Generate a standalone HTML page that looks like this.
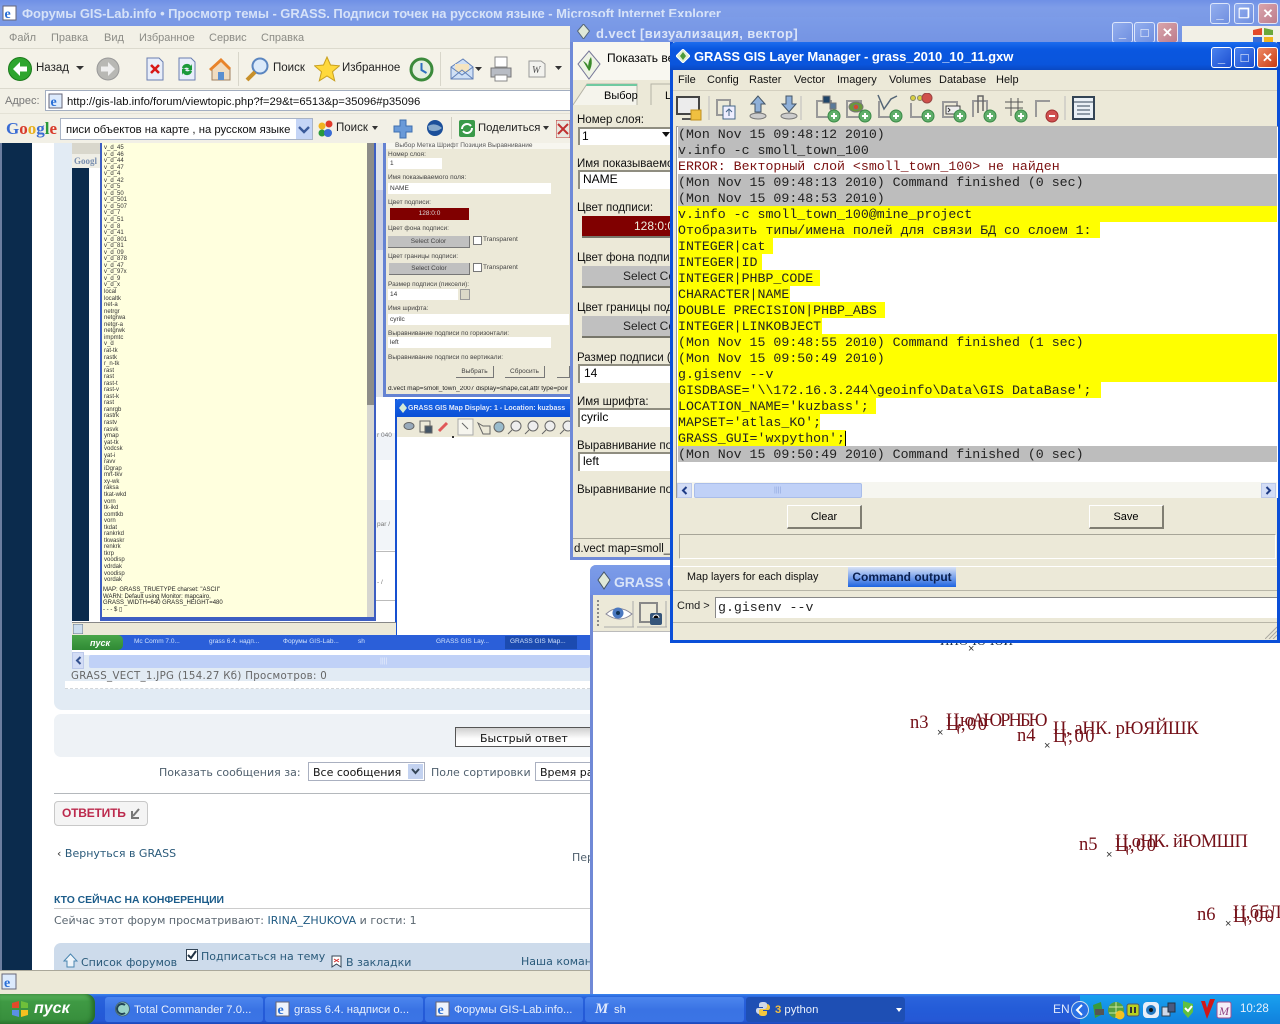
<!DOCTYPE html>
<html lang="ru"><head><meta charset="utf-8"><title>GRASS</title>
<style>
html,body{margin:0;padding:0;width:1280px;height:1024px;overflow:hidden;background:#fff}
body{position:relative;font-family:"Liberation Sans",sans-serif;font-size:12px;color:#000}
div,span,svg,pre{position:absolute}
.t{white-space:nowrap;line-height:1}
.d{font-family:"DejaVu Sans",sans-serif;font-size:11px;color:#50606e}
.m{left:678px;font-family:"Liberation Mono",monospace;font-size:13.25px;line-height:18px;height:16px;white-space:pre;color:#222}
.g{background:#bdbdbd}.y{background:#ff0}
.b{width:19px;height:19px;border:1px solid #fff;border-radius:3px;color:#fff;font:bold 13px/19px "Liberation Sans",sans-serif;text-align:center;background:linear-gradient(135deg,#4a82ef,#1c4fd0)}
.x{background:linear-gradient(135deg,#ee8a66,#c93c14)}
.bi{background:linear-gradient(135deg,#93aeee,#6f8fe0);border-color:#dce6fb}
.xi{background:linear-gradient(135deg,#d9a4ab,#bd7d8c);border-color:#e4e4f4}
.lab{left:577px;font-size:11.5px;white-space:nowrap;line-height:1;color:#111;margin-top:2px}
.inp{left:578px;width:94px;background:#fff;border-top:2px solid #8f8d80;border-left:2px solid #8f8d80;font-size:12px;line-height:14px;padding-left:2px;box-sizing:border-box}
.bt{left:582px;width:90px;height:20px;border-right:2px solid #77766a;border-bottom:2px solid #77766a;background:#c0c0c0;font-size:12px;line-height:21px;white-space:nowrap;overflow:hidden;color:#222}
.nl{font-size:6.5px;color:#444;line-height:1;white-space:nowrap;font-family:"Liberation Sans",sans-serif}
.nf{left:388px;background:#fff;height:11px;font-size:6.5px;line-height:11px;color:#333;padding-left:2px;box-sizing:border-box}
.nb{background:#c0c0c0;border-right:1px solid #777;border-bottom:1px solid #777;font-size:6.5px;line-height:12px;color:#444;text-align:center;box-sizing:border-box}
.mi{top:73px;font-size:11px;line-height:14px;white-space:nowrap;color:#111}
.ti{top:27px;height:22px;font-size:11px;line-height:22px;color:#8b8b85}
.tb{top:997px;height:25px;border-radius:3px;background:linear-gradient(#4c86ee,#3a73e4 50%,#3b74e5);color:#e9f0fd;font-size:11.3px;line-height:27px;white-space:nowrap}
.rd{font-family:"Liberation Serif",serif;font-size:18.5px;color:#741018;white-space:nowrap;line-height:1}
.cr{font:11px/1 "Liberation Sans",sans-serif;color:#333}
.sa{background:#d3ddf6;border:1px solid #bcc9ea;box-sizing:border-box}
</style></head><body>

<!-- IE window chrome -->
<div style="left:0;top:0;width:1280px;height:26px;background:linear-gradient(#6f90e6,#7e9de8 30%,#7998e5)"></div>
<svg style="left:2px;top:5px" width="15" height="16" viewBox="0 0 15 16"><rect x="1" y="1" width="13" height="14" fill="#fff" stroke="#667"/><text x="2.5" y="13" font-family="Liberation Serif" font-size="14" font-weight="bold" fill="#2a6fd6">e</text></svg>
<div class="t" style="left:22px;top:7px;font-size:13px;font-weight:bold;color:#d6e2f8;letter-spacing:-.05px">Форумы GIS-Lab.info • Просмотр темы - GRASS. Подписи точек на русском языке - Microsoft Internet Explorer</div>
<div class="b bi" style="left:1210px;top:3px;width:18px">_</div>
<div class="b bi" style="left:1234px;top:3px;width:18px">❐</div>
<div class="b xi" style="left:1258px;top:3px;width:18px">✕</div>
<div style="left:0;top:26px;width:1280px;height:22px;background:#f2f0e6"></div>
<div class="ti" style="left:9px">Файл</div><div class="ti" style="left:51px">Правка</div><div class="ti" style="left:104px">Вид</div><div class="ti" style="left:139px">Избранное</div><div class="ti" style="left:209px">Сервис</div><div class="ti" style="left:261px">Справка</div>
<div style="left:0;top:48px;width:1280px;height:41px;background:#f4f2e8;border-top:1px solid #dcdace"></div>
<svg style="left:8px;top:55px" width="24" height="28" viewBox="0 0 24 28"><circle cx="12" cy="14" r="11.5" fill="#2ea52e" stroke="#1c7a1c"/><path d="M5 14l7-7v4.500h7v5h-7V21z" fill="#fff"/></svg>
<div class="t" style="left:36px;top:63px;font-size:11.5px;color:#222">Назад</div>
<svg style="left:76px;top:66px" width="8" height="5"><path d="M0 0h8L4 4z" fill="#333"/></svg>
<svg style="left:96px;top:56px" width="24" height="26" viewBox="0 0 24 26"><circle cx="12" cy="13" r="11" fill="#b8b8b4" stroke="#999"/><path d="M19 13l-7-7v4.500H5v5h7V20z" fill="#eee"/></svg>
<svg style="left:146px;top:57px" width="18" height="24" viewBox="0 0 18 24"><path d="M1 1h12l4 4v18H1z" fill="#e8eefa" stroke="#6a7fb0"/><path d="M5 8l8 8M13 8l-8 8" stroke="#d81818" stroke-width="2.600"/></svg>
<svg style="left:178px;top:57px" width="18" height="24" viewBox="0 0 18 24"><path d="M1 1h12l4 4v18H1z" fill="#e8eefa" stroke="#6a7fb0"/><path d="M4 11a5 5 0 0 1 9-2l1-2v6H9l2-1a3 3 0 0 0-5 0zM14 14a5 5 0 0 1-9 2l-1 2v-6h5l-2 1a3 3 0 0 0 5 0z" fill="#1a9a3a"/></svg>
<svg style="left:208px;top:57px" width="24" height="24" viewBox="0 0 24 24"><path d="M4 11L13 2l9 9v12H4z" fill="#f0dcc0" stroke="#a08060"/><path d="M1 12L13 1l10 10-2 2-8-8-10 9z" fill="#e8832a"/><rect x="10" y="15" width="6" height="8" fill="#5b8fd0"/></svg>
<div style="left:238px;top:52px;width:1px;height:34px;background:#d8d6ca"></div>
<svg style="left:245px;top:56px" width="26" height="26" viewBox="0 0 26 26"><circle cx="15" cy="10" r="7.500" fill="#dbeafa" stroke="#5b86c0" stroke-width="2"/><path d="M10 16L2 24" stroke="#c8902a" stroke-width="4"/></svg>
<div class="t" style="left:273px;top:63px;font-size:11.5px;color:#222">Поиск</div>
<svg style="left:314px;top:56px" width="26" height="26" viewBox="0 0 26 26"><path d="M13 1l3.500 8 9 .8-7 6 2.200 9L13 20l-7.700 4.800 2.200-9-7-6 9-.8z" fill="#ffd93c" stroke="#c8a020"/></svg>
<div class="t" style="left:342px;top:63px;font-size:11.5px;color:#222">Избранное</div>
<svg style="left:409px;top:57px" width="25" height="25" viewBox="0 0 25 25"><circle cx="12.500" cy="12.500" r="10.500" fill="#e5efe0" stroke="#3b8a3b" stroke-width="3"/><path d="M12.500 6v7l5 3" stroke="#2f6fbf" stroke-width="2" fill="none"/></svg>
<div style="left:440px;top:52px;width:1px;height:34px;background:#d8d6ca"></div>
<svg style="left:450px;top:57px" width="26" height="24" viewBox="0 0 26 24"><path d="M1 10l12-8 10 8v12H1z" fill="#cfe0f6" stroke="#6080b8"/><path d="M5 7h14v8H5z" fill="#f4e4c0"/><path d="M1 22l11-9 11 9M1 10l11 8 11-8" fill="none" stroke="#6080b8"/></svg>
<svg style="left:475px;top:67px" width="7" height="4"><path d="M0 0h7L3.500 4z" fill="#333"/></svg>
<svg style="left:489px;top:56px" width="24" height="26" viewBox="0 0 24 26"><rect x="6" y="1" width="12" height="10" fill="#fff" stroke="#888"/><path d="M2 12h20v9H2z" fill="#b8bcc4" stroke="#777"/><rect x="6" y="19" width="12" height="6" fill="#fff" stroke="#888"/></svg>
<svg style="left:528px;top:59px" width="18" height="20" viewBox="0 0 18 20"><path d="M1 2h12l4 3v13H1z" fill="#f2f2ee" stroke="#999"/><text x="4" y="14" font-family="Liberation Serif" font-size="10" font-style="italic" fill="#555">W</text></svg>
<svg style="left:555px;top:66px" width="7" height="4"><path d="M0 0h7L3.500 4z" fill="#333"/></svg>

<div style="left:0;top:88px;width:1280px;height:25px;background:#f2f0e6;border-top:1px solid #dcdace"></div>
<div class="t" style="left:5px;top:96px;font-size:11px;color:#777">Адрес:</div>
<div style="left:45px;top:90px;width:530px;height:21px;background:#fff;border:1px solid #a3aec0;box-sizing:border-box"></div>
<svg style="left:48px;top:93px" width="15" height="16" viewBox="0 0 15 16"><rect x="1" y="1" width="13" height="14" fill="#dceafc" stroke="#667"/><text x="2.500" y="13" font-family="Liberation Serif" font-size="14" font-weight="bold" fill="#2a6fd6">e</text></svg>
<div class="t" style="left:67px;top:97px;font-size:11.3px;color:#111">http://gis-lab.info/forum/viewtopic.php?f=29&amp;t=6513&amp;p=35096#p35096</div>

<div style="left:0;top:113px;width:1280px;height:30px;background:#f2f0e6;border-top:1px solid #e4e2d6;box-sizing:border-box"></div>
<div class="t" style="left:6px;top:120px;font-family:'Liberation Serif',serif;font-size:17px;font-weight:bold"><span style="position:static;color:#3a6cd4">G</span><span style="position:static;color:#d83a2a">o</span><span style="position:static;color:#e8b020">o</span><span style="position:static;color:#3a6cd4">g</span><span style="position:static;color:#2a9a3a">l</span><span style="position:static;color:#d83a2a">e</span></div>
<div style="left:60px;top:118px;width:253px;height:22px;background:#fff;border:1px solid #a9b4c6;box-sizing:border-box"></div>
<div class="t" style="left:66px;top:125px;font-size:11.3px;color:#111">писи объектов на карте , на русском языке</div>
<svg style="left:296px;top:119px" width="16" height="20" viewBox="0 0 16 20"><rect width="16" height="20" fill="#c5d5f6"/><path d="M3 8l5 5 5-5" stroke="#3a5a9a" stroke-width="2.400" fill="none"/></svg>
<svg style="left:317px;top:119px" width="16" height="20" viewBox="0 0 16 20"><circle cx="12" cy="5" r="3.500" fill="#e23a2a"/><circle cx="5" cy="7" r="3.500" fill="#f0b420"/><circle cx="5" cy="14" r="3.500" fill="#2a9a3a"/><circle cx="11" cy="14" r="4" fill="#3a6cd4"/></svg>
<div class="t" style="left:336px;top:123px;font-size:11.5px;color:#222">Поиск</div>
<svg style="left:372px;top:126px" width="6" height="4"><path d="M0 0h6L3 4z" fill="#333"/></svg>
<svg style="left:393px;top:119px" width="20" height="20" viewBox="0 0 20 20"><path d="M7 1h6v6h6v6h-6v6H7v-6H1V7h6z" fill="#6a9ad8" stroke="#3f6fb0"/></svg>
<svg style="left:426px;top:119px" width="18" height="18" viewBox="0 0 18 18"><circle cx="9" cy="9" r="8" fill="#1b4f9a"/><path d="M2 7q7-4 14 2-6 5-13 2z" fill="#8ac"/></svg>
<div style="left:451px;top:117px;width:1px;height:22px;background:#d0cec2"></div>
<svg style="left:459px;top:120px" width="16" height="17" viewBox="0 0 16 17"><rect width="16" height="17" rx="2" fill="#3a9a4a"/><path d="M3 9a5 5 0 0 1 9-3M13 8a5 5 0 0 1-9 3" stroke="#fff" stroke-width="2" fill="none"/></svg>
<div class="t" style="left:478px;top:123px;font-size:11.3px;color:#222">Поделиться</div>
<svg style="left:543px;top:126px" width="6" height="4"><path d="M0 0h6L3 4z" fill="#333"/></svg>
<svg style="left:556px;top:120px" width="14" height="18" viewBox="0 0 14 18"><rect width="14" height="18" fill="#e8e8e0" stroke="#c03030"/><path d="M2 4l10 10M12 4L2 14" stroke="#c03030" stroke-width="2"/></svg>

<!-- Page -->
<div style="left:0;top:143px;width:2px;height:827px;background:#6c7ea0"></div>
<div style="left:2px;top:143px;width:30px;height:827px;background:#0b2b4d"></div>
<div style="left:54px;top:143px;width:537px;height:567px;background:#e2ebf4;border-radius:0 0 0 8px"></div>

<!-- nested screenshot -->
<div style="left:72px;top:143px;width:519px;height:512px;background:#fff"></div>
<div style="left:72px;top:143px;width:28px;height:11px;background:#d9d7cc"></div>
<div style="left:72px;top:154px;width:28px;height:14px;background:#efeee6"></div>
<div class="t" style="left:74px;top:156px;font:bold 9px 'Liberation Serif',serif;color:#7a8fb0">Googl</div>
<div style="left:72px;top:168px;width:17px;height:453px;background:#0b2b4d"></div>
<div style="left:100px;top:143px;width:276px;height:478px;background:#3d5ec2"></div>
<div style="left:102px;top:143px;width:265px;height:474px;background:#ffffde"></div>
<div style="left:367px;top:143px;width:7px;height:262px;background:#8d8d88"></div>
<div style="left:367px;top:405px;width:7px;height:212px;background:#d6d6d0"></div>
<pre class="nl" style="left:104px;top:145px;margin:0;line-height:6.55px;font-size:6px;color:#333;white-space:pre">v_d_45
v_d_46
v_d_44
v_d_47
v_d_4
v_d_42
v_d_5
v_d_50
v_d_501
v_d_507
v_d_7
v_d_51
v_d_8
v_d_41
v_d_801
v_d_81
v_d_09
v_d_878
v_d_47
v_d_97x
v_d_9
v_d_x
local
localtk
net-a
netrgr
netgrwa
netgr-a
netgrwk
impmtc
v_d
rat-tk
rastk
r_n-tk
rast
rast
rast-t
rast-v
rast-k
rast
ranrgb
rastrk
rastv
rasvk
ymap
yat-tk
vodcsk
yat-i
ravv
iDgrap
mrt-tkv
xy-wk
raksa
tkat-wkd
vorn
tk-ikd
comtkb
vorn
tkdat
rankrkd
tkwaskr
renkrk
tkrp
voodisp
vdrdak
voodisp
vordak</pre>
<div class="t" style="left:103px;top:587px;font-size:6px;color:#222">MAP: GRASS_TRUETYPE  charset: "ASCII"</div>
<div class="t" style="left:103px;top:594px;font-size:6px;color:#222">WARN: Default using  Monitor: mapcairo,</div>
<div class="t" style="left:103px;top:600px;font-size:6px;color:#222">GRASS_WIDTH=640  GRASS_HEIGHT=480</div>
<div class="t" style="left:103px;top:607px;font-size:6px;color:#222">- - - $  ▯</div>

<div style="left:376px;top:143px;width:8px;height:254px;background:#dfe3ea"></div>
<div style="left:376px;top:190px;width:8px;height:60px;background:#c5cbe2"></div>
<div style="left:376px;top:397px;width:19px;height:238px;background:#fff"></div>
<div style="left:376px;top:433px;width:19px;height:27px;background:#f0f3f8"></div>
<div style="left:376px;top:500px;width:19px;height:50px;background:#f2f5f9"></div>
<div style="left:376px;top:551px;width:19px;height:1px;background:#bbb"></div>
<div style="left:376px;top:600px;width:19px;height:1px;background:#bbb"></div>
<div class="nl" style="left:377px;top:433px;color:#777">r 040</div>
<div class="nl" style="left:377px;top:522px;color:#777">par /</div>
<div class="nl" style="left:377px;top:580px;color:#777">- /</div>

<!-- nested form -->
<div style="left:383px;top:143px;width:187px;height:254px;background:#ece9d8;border-left:3px solid #6482d2;border-bottom:3px solid #6482d2;box-sizing:border-box"></div>
<div style="left:386px;top:143px;width:184px;height:6px;background:#f7f6ef"></div>
<div class="nl" style="left:395px;top:143px;color:#555">Выбор   Метка   Шрифт   Позиция   Выравнивание</div>
<div class="nl" style="left:388px;top:152px">Номер слоя:</div>
<div class="nf" style="top:158px;width:54px">1</div>
<div class="nl" style="left:388px;top:175px">Имя показываемого поля:</div>
<div class="nf" style="top:183px;width:163px">NAME</div>
<div class="nl" style="left:388px;top:200px">Цвет подписи:</div>
<div style="left:390px;top:208px;width:79px;height:12px;background:#800000;font-size:6.5px;line-height:12px;color:#ddd;text-align:center">128:0:0</div>
<div class="nl" style="left:388px;top:226px">Цвет фона подписи:</div>
<div class="nb" style="left:388px;top:236px;width:82px;height:12px">Select Color</div>
<div style="left:473px;top:236px;width:7px;height:7px;background:#fff;border:1px solid #777"></div>
<div class="nl" style="left:483px;top:237px">Transparent</div>
<div class="nl" style="left:388px;top:254px">Цвет границы подписи:</div>
<div class="nb" style="left:389px;top:263px;width:81px;height:12px">Select Color</div>
<div style="left:473px;top:263px;width:7px;height:7px;background:#fff;border:1px solid #777"></div>
<div class="nl" style="left:483px;top:265px">Transparent</div>
<div class="nl" style="left:388px;top:282px">Размер подписи (пиксели):</div>
<div class="nf" style="top:289px;width:70px">14</div>
<div style="left:460px;top:289px;width:10px;height:11px;background:#dcd9c8;border:1px solid #999;box-sizing:border-box"></div>
<div class="nl" style="left:388px;top:306px">Имя шрифта:</div>
<div class="nf" style="top:314px;width:181px">cyrilc</div>
<div class="nl" style="left:388px;top:331px">Выравнивание подписи по горизонтали:</div>
<div class="nf" style="top:337px;width:163px">left</div>
<div class="nl" style="left:388px;top:355px">Выравнивание подписи по вертикали:</div>
<div class="nb" style="left:456px;top:366px;width:38px;height:12px;background:#ece9d8">Выбрать</div>
<div class="nb" style="left:505px;top:366px;width:40px;height:12px;background:#ece9d8">Сбросить</div>
<div class="nb" style="left:557px;top:366px;width:13px;height:12px;background:#ece9d8"></div>
<div class="nl" style="left:388px;top:386px;color:#222;width:180px;overflow:hidden">d.vect map=smoll_town_2007 display=shape,cat,attr type=point,line</div>

<!-- nested map display -->
<div style="left:395px;top:399px;width:195px;height:236px;background:#fff;border-left:2px solid #1650d0;box-sizing:border-box"></div>
<div style="left:395px;top:399px;width:195px;height:18px;background:linear-gradient(#1a66e8,#0a4fd6);border-radius:4px 0 0 0"></div>
<div class="t" style="left:408px;top:405px;font-size:7px;font-weight:bold;color:#dfe8fb">GRASS GIS Map Display: 1 - Location: kuzbass</div>
<svg style="left:399px;top:403px" width="8" height="10"><path d="M4 0l4 5-4 5-4-5z" fill="#d5ead5"/></svg>
<div style="left:397px;top:417px;width:193px;height:20px;background:#ece9d8"></div>
<svg style="left:400px;top:418px" width="170" height="18" viewBox="0 0 170 18" fill="none" stroke="#666">
<ellipse cx="9" cy="8" rx="5" ry="3.500" fill="#9ab"/><rect x="20" y="3" width="10" height="11"/><rect x="25" y="8" width="7" height="7" fill="#456"/>
<path d="M39 13l8-8" stroke="#e05858" stroke-width="3"/><rect x="58" y="1" width="15" height="16" fill="#f6f5ee" stroke="#aaa"/><path d="M62 5l6 6"/>
<path d="M78 5l5 3h7v8h-7z"/><circle cx="99" cy="9" r="5" fill="#9bc"/><circle cx="116" cy="8" r="5" fill="#eee"/><path d="M112 12l-4 4"/><circle cx="133" cy="8" r="5" fill="#eee"/><path d="M129 12l-4 4"/><circle cx="150" cy="8" r="5" fill="#eee"/><path d="M146 12l-4 4"/><circle cx="168" cy="8" r="5" fill="#eee"/><path d="M164 12l-4 4"/>
</svg>
<div style="left:452px;top:436px;width:2px;height:2px;background:#333"></div>

<!-- nested status/taskbar -->
<div style="left:72px;top:622px;width:324px;height:13px;background:#ece9d8;border-top:1px solid #888;box-sizing:border-box"></div>
<svg style="left:73px;top:624px" width="10" height="10"><rect width="10" height="10" fill="#cde" stroke="#678"/></svg>
<div style="left:72px;top:635px;width:519px;height:15px;background:#2b5fd9"></div>
<div style="left:72px;top:635px;width:51px;height:15px;background:linear-gradient(#49a64a,#2f8a34);border-radius:0 5px 5px 0"></div>
<div class="t" style="left:90px;top:638px;font:italic bold 9px 'Liberation Sans',sans-serif;color:#fff">пуск</div>
<div class="t" style="left:134px;top:639px;font-size:6.5px;color:#cfe0fb">Mc Comm 7.0...</div>
<div class="t" style="left:209px;top:639px;font-size:6.5px;color:#cfe0fb">grass 6.4. надп...</div>
<div class="t" style="left:283px;top:639px;font-size:6.5px;color:#cfe0fb">Форумы GIS-Lab...</div>
<div class="t" style="left:358px;top:639px;font-size:6.5px;color:#cfe0fb">sh</div>
<div class="t" style="left:436px;top:639px;font-size:6.5px;color:#cfe0fb">GRASS GIS Lay...</div>
<div style="left:505px;top:636px;width:72px;height:13px;background:#1c4bb0"></div>
<div class="t" style="left:510px;top:639px;font-size:6.500px;color:#cfe0fb">GRASS GIS Map...</div>
<div style="left:72px;top:650px;width:519px;height:2px;background:#fff"></div>
<div class="sa" style="left:72px;top:652px;width:12px;height:17px"></div>
<svg style="left:75px;top:656px" width="7" height="9" viewBox="0 0 7 9"><path d="M5.500 1L2 4.500 5.500 8" stroke="#33518f" stroke-width="2" fill="none"/></svg>
<div style="left:89px;top:655px;width:501px;height:13px;background:#c0d1f7;border-radius:2px"></div>
<div class="t" style="left:380px;top:658px;font-size:7px;color:#e8eefb">||||</div>
<div style="left:65px;top:681px;width:525px;height:8px;background:#fff"></div>
<div style="left:65px;top:688px;width:525px;height:0;border-top:1px dashed #d2d6da"></div>
<div class="t d" style="left:71px;top:672px;font-size:10.2px;letter-spacing:.32px;color:#666">GRASS_VECT_1.JPG (154.27 Кб) Просмотров: 0</div>

<!-- forum footer -->
<div style="left:54px;top:714px;width:537px;height:43px;background:#eef2f6;border-radius:7px 0 0 7px"></div>
<div style="left:455px;top:727px;width:136px;height:20px;background:linear-gradient(#d0d0d0,#fdfdfd 60%);border:1px solid #555;box-sizing:border-box"></div>
<div class="t d" style="left:480px;top:733px;color:#111">Быстрый ответ</div>
<div class="t d" style="left:159px;top:767px">Показать сообщения за:</div>
<div style="left:308px;top:762px;width:117px;height:19px;background:#fff;border:1px solid #aab0c0;box-sizing:border-box"></div>
<div class="t d" style="left:313px;top:767px;color:#111">Все сообщения</div>
<div style="left:408px;top:764px;width:15px;height:15px;background:#c3d2f0"></div>
<svg style="left:411px;top:768px" width="9" height="7" viewBox="0 0 9 7"><path d="M1 1l3.500 4L8 1" stroke="#345" stroke-width="2" fill="none"/></svg>
<div class="t d" style="left:431px;top:767px">Поле сортировки</div>
<div style="left:535px;top:762px;width:56px;height:19px;background:#fff;border:1px solid #aab0c0;box-sizing:border-box"></div>
<div class="t d" style="left:540px;top:767px;color:#111">Время размещения</div>
<div style="left:54px;top:793px;width:537px;height:1px;background:#b4b8bc"></div>
<div style="left:54px;top:801px;width:94px;height:25px;background:#f4f4f4;border:1px solid #c8c8c8;border-radius:4px;box-sizing:border-box"></div>
<div class="t" style="left:62px;top:807px;font-size:12px;font-weight:bold;color:#bc2a4d;letter-spacing:-.2px">ОТВЕТИТЬ</div>
<svg style="left:130px;top:808px" width="10" height="11" viewBox="0 0 10 11"><path d="M9 1L3 8M2 3v7h7" stroke="#777" stroke-width="2" fill="none"/></svg>
<div class="t d" style="left:57px;top:848px;color:#2a5a7a"><span style="position:static;color:#333">‹</span> Вернуться в GRASS</div>
<div class="t d" style="left:572px;top:852px">Перейти</div>
<div class="t" style="left:54px;top:895px;font-size:10.4px;font-weight:bold;color:#1c5c8a;margin-top:1px">КТО СЕЙЧАС НА КОНФЕРЕНЦИИ</div>
<div style="left:54px;top:908px;width:537px;height:1px;background:#ccc"></div>
<div class="t d" style="left:54px;top:915px;color:#5a6670">Сейчас этот форум просматривают: <span style="position:static;color:#1f5a82">IRINA_ZHUKOVA</span> и гости: 1</div>
<div style="left:54px;top:943px;width:537px;height:27px;background:#cddbeb;border-radius:7px 0 0 0"></div>
<svg style="left:63px;top:953px" width="15" height="15" viewBox="0 0 15 15"><path d="M1 8l6.500-7L14 8h-3v6H4V8z" fill="#eef4fa" stroke="#4a86b0"/></svg>
<div class="t d" style="left:81px;top:957px;color:#2a5a7a">Список форумов</div>
<svg style="left:186px;top:949px" width="12" height="12" viewBox="0 0 12 12"><rect x=".5" y=".5" width="11" height="11" fill="#fff" stroke="#345"/><path d="M2 6l3 3 5-7" stroke="#234" stroke-width="2" fill="none"/></svg>
<div class="t d" style="left:201px;top:951px;color:#2a5a7a">Подписаться на тему</div>
<svg style="left:331px;top:955px" width="11" height="13" viewBox="0 0 11 13"><path d="M1 1h9v11l-4.500-3L1 12z" fill="#fff" stroke="#345"/><path d="M3 4l5 3M8 4L3 7" stroke="#d02a2a"/></svg>
<div class="t d" style="left:346px;top:957px;color:#2a5a7a">В закладки</div>
<div class="t d" style="left:521px;top:956px;color:#2a5a7a">Наша команда</div>
<div style="left:0;top:970px;width:592px;height:24px;background:#ece9d8;border-top:1px solid #aaa89a;box-sizing:border-box"></div>
<svg style="left:1px;top:973px" width="16" height="17" viewBox="0 0 16 17"><rect x="1" y="1" width="14" height="15" fill="#dceafc" stroke="#667"/><text x="3" y="14" font-family="Liberation Serif" font-size="14" font-weight="bold" fill="#2a6fd6">e</text></svg>

<!-- bottom GRASS map window -->
<div style="left:590px;top:565px;width:690px;height:429px;background:#fff;border-left:3px solid #7089d6;box-sizing:border-box;border-radius:6px 0 0 0"></div>
<div style="left:590px;top:565px;width:90px;height:30px;background:linear-gradient(#7c9ce8,#7090e4);border-radius:6px 0 0 0"></div>
<svg style="left:597px;top:571px" width="14" height="20" viewBox="0 0 14 20"><path d="M7 1l6 8-6 9-6-9z" fill="#dfe8d8" stroke="#456"/></svg>
<div class="t" style="left:614px;top:575px;font-size:14px;font-weight:bold;color:#d9e4f8;letter-spacing:-.1px">GRASS GIS</div>
<div style="left:593px;top:595px;width:77px;height:37px;background:#ece9d8;border-bottom:1px solid #bbb;box-sizing:border-box"></div>
<div style="left:597px;top:600px;width:1px;height:26px;border-left:2px dotted #888"></div>
<svg style="left:604px;top:600px" width="30" height="28" viewBox="0 0 30 28"><path d="M2 14q12-11 26 0-12 10-26 0z" fill="#fff" stroke="#889"/><circle cx="14" cy="13" r="5.500" fill="#4a78c0"/><circle cx="14" cy="13" r="2" fill="#135"/><path d="M0 27h30M29 1v26" stroke="#aaa"/></svg>
<svg style="left:637px;top:600px" width="30" height="28" viewBox="0 0 30 28"><rect x="3" y="3" width="17" height="19" fill="none" stroke="#888" stroke-width="2"/><rect x="13" y="13" width="12" height="12" rx="2" fill="#35557a"/><path d="M16 18a3 3 0 0 1 6 0" stroke="#fff"/><path d="M0 27h30M29 1v26" stroke="#aaa"/></svg>

<!-- labels -->
<div class="rd" style="left:940px;top:634px;font-size:13px;height:11px;width:80px;overflow:hidden;color:#234">ИНО-Ю-ЮЙ ЧЧЧ</div>
<div class="cr" style="left:968px;top:644px">×</div>
<div class="rd" style="left:910px;top:714px">n3</div><div class="rd" style="left:946px;top:716px;letter-spacing:1.500px">Ц,00</div><div class="rd" style="left:946px;top:712px;letter-spacing:-2px">Ц,юАЮРНБЮ</div>
<div class="cr" style="left:937px;top:728px">×</div>
<div class="rd" style="left:1017px;top:727px">n4</div><div class="rd" style="left:1053px;top:728px;letter-spacing:1.500px">Ц;00</div><div class="rd" style="left:1053px;top:720px;letter-spacing:-.4px">Ц, аНК. рЮЯЙШК</div>
<div class="cr" style="left:1044px;top:741px">×</div>
<div class="rd" style="left:1079px;top:836px">n5</div><div class="rd" style="left:1115px;top:837px;letter-spacing:1.500px">Ц,00</div><div class="rd" style="left:1115px;top:833px;letter-spacing:-.6px">Ц,оНК. йЮМШП</div>
<div class="cr" style="left:1106px;top:850px">×</div>
<div class="rd" style="left:1197px;top:906px">n6</div><div class="rd" style="left:1233px;top:908px;letter-spacing:1.500px;width:47px;overflow:hidden">Ц,00</div><div class="rd" style="left:1233px;top:904px;letter-spacing:-.6px;width:47px;overflow:hidden">Ц,бЕЛЮ</div>
<div class="cr" style="left:1225px;top:919px">×</div>

<!-- d.vect window -->
<div style="left:570px;top:17px;width:612px;height:25px;background:linear-gradient(#7c9ce8,#7594e3);border-radius:7px 7px 0 0"></div>
<svg style="left:577px;top:24px" width="13" height="15" viewBox="0 0 13 15"><path d="M6.500 0l6 7-6 8-6-8z" fill="#dfe8d8" stroke="#567"/></svg>
<div class="t" style="left:596px;top:27px;font-size:13px;font-weight:bold;color:#dbe5f8;letter-spacing:.4px">d.vect [визуализация, вектор]</div>
<div class="b bi" style="left:1112px;top:22px">_</div><div class="b bi" style="left:1134px;top:22px">□</div><div class="b xi" style="left:1157px;top:22px">✕</div>
<div style="left:1182px;top:26px;width:98px;height:16px;background:#f2f0e6"></div>
<svg style="left:1252px;top:27px" width="22" height="15" viewBox="0 0 22 15"><path d="M1 3l9-2v7H1z" fill="#e24a2a"/><path d="M12 1l9 2v5h-9z" fill="#6aa83a"/><path d="M1 10h9v5H1z" fill="#3a6cd4"/><path d="M12 10h9v5h-9z" fill="#f0b420"/></svg>
<div style="left:570px;top:42px;width:100px;height:518px;background:#ece9d8;border-left:3px solid #6f8ad8;border-bottom:3px solid #6f8ad8;box-sizing:border-box"></div>
<div style="left:573px;top:42px;width:97px;height:38px;background:#f8f7f0"></div>
<svg style="left:577px;top:50px" width="24" height="30" viewBox="0 0 24 30"><path d="M12 1l11 13-11 15L1 14z" fill="#eef3e4" stroke="#779"/><path d="M12 21L6 11q6 3 5 8 0-8 3-12 2 6-1 13z" fill="#3a8a2a"/></svg>
<div class="t" style="left:607px;top:52px;font-size:12px">Показать вектор</div>
<div style="left:573px;top:80px;width:97px;height:26px;background:#ece9d8"></div>
<svg style="left:573px;top:81px" width="97" height="25" viewBox="0 0 97 25"><path d="M0 24L14 3h50v21" fill="#f5f4ec" stroke="#b4b2a6"/><path d="M14 3h50v2H13z" fill="#6fc9a0"/><path d="M78 24V3h20" fill="none" stroke="#b4b2a6"/></svg>
<div class="t" style="left:604px;top:91px;font-size:11px">Выбор</div>
<div class="t" style="left:665px;top:91px;font-size:11px">L</div>
<div class="lab" style="top:113px">Номер слоя:</div>
<div class="inp" style="top:127px;height:18px">1</div>
<svg style="left:662px;top:132px" width="8" height="6"><path d="M0 0h8L4 5z" fill="#111"/></svg>
<div class="lab" style="top:157px">Имя показываемого</div>
<div class="inp" style="top:170px;height:19px;padding-left:3px">NAME</div>
<div class="lab" style="top:201px">Цвет подписи:</div>
<div class="bt" style="top:216px;background:#800000;color:#eed"><span style="left:52px;top:0">128:0:0</span></div>
<div class="lab" style="top:251px">Цвет фона подписи</div>
<div class="bt" style="top:266px"><span style="left:41px;top:0">Select Color</span></div>
<div class="lab" style="top:301px">Цвет границы подписи</div>
<div class="bt" style="top:316px"><span style="left:41px;top:0">Select Color</span></div>
<div class="lab" style="top:351px">Размер подписи (пт</div>
<div class="inp" style="top:364px;height:19px;padding-left:4px">14</div>
<div class="lab" style="top:395px">Имя шрифта:</div>
<div class="inp" style="top:408px;height:19px;padding-left:1px">cyrilc</div>
<div class="lab" style="top:439px">Выравнивание подписи</div>
<div class="inp" style="top:452px;height:19px;padding-left:3px">left</div>
<div class="lab" style="top:483px">Выравнивание подписи</div>
<div style="left:573px;top:538px;width:97px;height:1px;background:#aaa89a"></div>
<div class="lab" style="left:574px;top:542px">d.vect map=smoll_town</div>

<!-- Layer manager -->
<div style="left:670px;top:42px;width:610px;height:601px;background:#ece9d8;border:3px solid #0b4fd8;border-top:none;box-sizing:border-box"></div>
<div style="left:670px;top:42px;width:610px;height:28px;background:linear-gradient(#1d6cee,#0a57e0 25%,#0a55dc 80%,#0a48c2);border-radius:6px 6px 0 0"></div>
<svg style="left:676px;top:49px" width="14" height="14" viewBox="0 0 14 14"><path d="M7 0l7 7-7 7-7-7z" fill="#dff0d0" stroke="#fff"/><path d="M7 3l3 4-3 4-3-4z" fill="#4a9a3a"/></svg>
<div class="t" style="left:694px;top:50px;font-size:13px;font-weight:bold;color:#fff;letter-spacing:-.05px">GRASS GIS Layer Manager - grass_2010_10_11.gxw</div>
<div class="b" style="left:1211px;top:47px">_</div><div class="b" style="left:1234px;top:47px">□</div><div class="b x" style="left:1257px;top:47px">✕</div>
<div class="mi" style="left:678px">File</div><div class="mi" style="left:707px">Config</div><div class="mi" style="left:749px">Raster</div><div class="mi" style="left:794px">Vector</div><div class="mi" style="left:837px">Imagery</div><div class="mi" style="left:889px">Volumes</div><div class="mi" style="left:939px">Database</div><div class="mi" style="left:996px">Help</div>
<div style="left:673px;top:90px;width:604px;height:1px;background:#d4d0c0"></div>
<svg style="left:675px;top:93px" width="440" height="32" viewBox="0 0 440 32" fill="none" stroke="#777">
<rect x="2" y="4" width="22" height="17" fill="#ececec" stroke="#444" stroke-width="2"/><path d="M7 26h13" stroke="#555" stroke-width="2"/><rect x="16" y="17" width="10" height="10" fill="#f0c040" stroke="#c09020"/>
<path d="M34 3v24" stroke="#bbb"/><rect x="42" y="7" width="13" height="15" stroke="#999" stroke-width="2"/><rect x="48" y="13" width="12" height="13" fill="#eef" stroke="#468"/><path d="M54 23v-6M51 19l3-3 3 3" stroke="#468"/>
<path d="M83 3l-7 8h4v8h6v-8h4z" fill="#8fb0d8" stroke="#456"/><ellipse cx="83" cy="23" rx="8" ry="3" fill="#ccc"/>
<path d="M114 19l-7-8h4V3h6v8h4z" fill="#8fb0d8" stroke="#456"/><ellipse cx="114" cy="23" rx="8" ry="3" fill="#ccc"/>
<path d="M126 3v24" stroke="#bbb"/>
<rect x="142" y="8" width="14" height="16" stroke="#999" stroke-width="2"/><rect x="148" y="3" width="7" height="7" fill="#1f4468"/><rect x="155" y="10" width="6" height="6" fill="#5a7a9a"/><circle cx="159" cy="23" r="6" fill="#5fae6a" stroke="#3a8a46"/><path d="M156 23h6M159 20v6" stroke="#fff" stroke-width="2"/>
<rect x="172" y="8" width="14" height="16" stroke="#999" stroke-width="2"/><ellipse cx="181" cy="14" rx="7" ry="5" fill="#6a9a3a"/><circle cx="181" cy="14" r="2.500" fill="#d84a2a"/><circle cx="190" cy="23" r="6" fill="#5fae6a" stroke="#3a8a46"/><path d="M187 23h6M190 20v6" stroke="#fff" stroke-width="2"/>
<path d="M204 8v16h12" stroke="#999" stroke-width="2"/><path d="M203 2l6 14 7-10 6-3" stroke="#567" stroke-width="1.500"/><circle cx="221" cy="23" r="6" fill="#5fae6a" stroke="#3a8a46"/><path d="M218 23h6M221 20v6" stroke="#fff" stroke-width="2"/>
<path d="M236 10v14h14" stroke="#999" stroke-width="2"/><circle cx="238" cy="5" r="2.500" fill="#d8d040" stroke="#886"/><circle cx="245" cy="5" r="2.500" fill="#d8d040" stroke="#886"/><circle cx="252" cy="5" r="5" fill="#d0504a" stroke="#944"/><circle cx="253" cy="23" r="6" fill="#5fae6a" stroke="#3a8a46"/><path d="M250 23h6M253 20v6" stroke="#fff" stroke-width="2"/>
<rect x="268" y="9" width="14" height="15" stroke="#999" stroke-width="2"/><rect x="271" y="13" width="14" height="8" fill="#eee" stroke="#444"/><path d="M273 15l2 2-2 2" stroke="#333"/><circle cx="285" cy="23" r="6" fill="#5fae6a" stroke="#3a8a46"/><path d="M282 23h6M285 20v6" stroke="#fff" stroke-width="2"/>
<path d="M298 24V8h14v16" stroke="#999" stroke-width="2"/><path d="M303 20V3h5v15" stroke="#666" stroke-width="1.500"/><circle cx="315" cy="23" r="6" fill="#5fae6a" stroke="#3a8a46"/><path d="M312 23h6M315 20v6" stroke="#fff" stroke-width="2"/>
<path d="M330 9h18M330 15h18M336 5v18M343 5v18" stroke="#555"/><circle cx="346" cy="23" r="6" fill="#5fae6a" stroke="#3a8a46"/><path d="M343 23h6M346 20v6" stroke="#fff" stroke-width="2"/>
<path d="M361 24V8h14" stroke="#999" stroke-width="2"/><circle cx="377" cy="23" r="6" fill="#d05050" stroke="#a03030"/><path d="M374 23h6" stroke="#fff" stroke-width="2"/>
<path d="M390 3v24" stroke="#bbb"/>
<rect x="398" y="4" width="21" height="22" fill="#eaf0f6" stroke="#345" stroke-width="2"/><path d="M398 9h21M402 13h13M402 17h13M402 21h13" stroke="#345"/>
</svg>

<div style="left:676px;top:126px;width:602px;height:372px;background:#fff;border-top:1px solid #999;border-left:1px solid #999;box-sizing:border-box"></div>
<div class="m g" style="top:126px;width:599px">(Mon Nov 15 09:48:12 2010)</div>
<div class="m g" style="top:142px;width:599px">v.info -c smoll_town_100</div>
<div class="m" style="top:158px;color:#7a1010">ERROR: Векторный слой &lt;smoll_town_100&gt; не найден</div>
<div class="m g" style="top:174px;width:599px">(Mon Nov 15 09:48:13 2010) Command finished (0 sec)</div>
<div class="m g" style="top:190px;width:599px">(Mon Nov 15 09:48:53 2010)</div>
<div class="m y" style="top:206px;width:599px">v.info -c smoll_town_100@mine_project</div>
<div class="m y" style="top:222px;width:422px">Отобразить типы/имена полей для связи БД со слоем 1:</div>
<div class="m y" style="top:238px;width:95px">INTEGER|cat</div>
<div class="m y" style="top:254px;width:84px">INTEGER|ID</div>
<div class="m y" style="top:270px;width:142px">INTEGER|PHBP_CODE</div>
<div class="m y" style="top:286px;width:112px">CHARACTER|NAME</div>
<div class="m y" style="top:302px;width:207px">DOUBLE PRECISION|PHBP_ABS</div>
<div class="m y" style="top:318px;width:144px">INTEGER|LINKOBJECT</div>
<div class="m y" style="top:334px;width:599px">(Mon Nov 15 09:48:55 2010) Command finished (1 sec)</div>
<div class="m y" style="top:350px;width:599px">(Mon Nov 15 09:50:49 2010)</div>
<div class="m y" style="top:366px;width:599px">g.gisenv --v</div>
<div class="m y" style="top:382px;width:423px">GISDBASE='\\172.16.3.244\geoinfo\Data\GIS DataBase';</div>
<div class="m y" style="top:398px;width:198px">LOCATION_NAME='kuzbass';</div>
<div class="m y" style="top:414px;width:142px">MAPSET='atlas_KO';</div>
<div class="m y" style="top:430px;width:168px">GRASS_GUI='wxpython';</div>
<div style="left:845px;top:431px;width:1px;height:15px;background:#000"></div>
<div class="m g" style="top:446px;width:599px">(Mon Nov 15 09:50:49 2010) Command finished (0 sec)</div>
<!-- scrollbar -->
<div style="left:677px;top:482px;width:600px;height:16px;background:#f6f6f0"></div>
<div class="sa" style="left:677px;top:483px;width:15px;height:15px"></div>
<svg style="left:680px;top:486px" width="9" height="9" viewBox="0 0 9 9"><path d="M6.500 1L3 4.500 6.500 8" stroke="#1f3c86" stroke-width="2" fill="none"/></svg>
<div style="left:694px;top:483px;width:168px;height:15px;background:#c0d1f7;border:1px solid #a9bdea;border-radius:2px;box-sizing:border-box"></div>
<div class="t" style="left:774px;top:487px;font-size:7px;color:#8ea6dd">||||</div>
<div class="sa" style="left:1261px;top:483px;width:15px;height:15px"></div>
<svg style="left:1264px;top:486px" width="9" height="9" viewBox="0 0 9 9"><path d="M2.500 1L6 4.500 2.500 8" stroke="#1f3c86" stroke-width="2" fill="none"/></svg>
<div style="left:787px;top:505px;width:75px;height:24px;background:#ece9d8;border:1px solid #fff;border-right:2px solid #807e72;border-bottom:2px solid #807e72;box-sizing:border-box;text-align:center;line-height:23px;font-size:11px">Clear</div>
<div style="left:1089px;top:505px;width:75px;height:24px;background:#ece9d8;border:1px solid #fff;border-right:2px solid #807e72;border-bottom:2px solid #807e72;box-sizing:border-box;text-align:center;line-height:23px;font-size:11px">Save</div>
<div style="left:679px;top:534px;width:597px;height:25px;border:1px solid #a7a598;border-right-color:#fff;border-bottom-color:#fff;box-sizing:border-box"></div>
<div style="left:673px;top:566px;width:604px;height:1px;background:#fff"></div>
<div class="t" style="left:687px;top:572px;font-size:10.800px;color:#111">Map layers for each display</div>
<div style="left:848px;top:567px;width:108px;height:20px;background:linear-gradient(#d8e2f6,#6a97ea 60%,#1e64e0);text-align:center;font-size:12px;font-weight:bold;line-height:21px;color:#0a2050">Command output</div>
<div style="left:673px;top:590px;width:604px;height:1px;background:#b8b6a8"></div>
<div class="t" style="left:677px;top:601px;font-size:11px;color:#222">Cmd &gt;</div>
<div style="left:715px;top:597px;width:562px;height:21px;background:#fff;border-left:1px solid #888;border-top:1px solid #888;box-sizing:border-box;font-family:'Liberation Mono',monospace;font-size:13.250px;line-height:19px;padding-left:2px;white-space:pre;color:#222">g.gisenv --v</div>
<div style="left:673px;top:622px;width:604px;height:1px;background:#b8b6a8"></div>
<svg style="left:1265px;top:625px" width="12" height="14" viewBox="0 0 12 14"><path d="M12 2L0 14M12 6L4 14M12 10L8 14" stroke="#aaa8a0"/></svg>

<!-- taskbar -->
<div style="left:0;top:994px;width:1280px;height:30px;background:linear-gradient(#3a84ee 0,#2a63dc 3px,#245cd8 50%,#2558d6 90%,#1d49b8)"></div>
<div style="left:0;top:994px;width:95px;height:30px;background:linear-gradient(#5db85f,#3f9a44 25%,#388f3d 85%,#2f7a32);border-radius:0 9px 9px 0;box-shadow:inset -3px 0 4px #256b28"></div>
<svg style="left:11px;top:1000px" width="18" height="18" viewBox="0 0 18 18"><path d="M1 3l7-2v7H1z" fill="#e24a2a"/><path d="M10 1l7 2v5h-7z" fill="#6fc03a"/><path d="M1 10h7v7l-7-2z" fill="#5a90e4"/><path d="M10 10h7v5l-7 2z" fill="#f4c020"/></svg>
<div class="t" style="left:34px;top:1001px;font-size:16px;font-weight:bold;font-style:italic;color:#fff">пуск</div>
<div class="tb" style="left:105px;width:158px"><span style="left:29px;top:0">Total Commander 7.0...</span></div>
<svg style="left:115px;top:1001px" width="15" height="16" viewBox="0 0 15 16"><circle cx="7.500" cy="8" r="7" fill="#9ad4c8" stroke="#467"/><path d="M10 4a5 5 0 1 0 0 8" stroke="#245" stroke-width="2" fill="none"/></svg>
<div class="tb" style="left:265px;width:158px"><span style="left:29px;top:0">grass 6.4. надписи о...</span></div>
<svg style="left:275px;top:1001px" width="15" height="16" viewBox="0 0 15 16"><rect x="1" y="1" width="13" height="14" fill="#eef4fc" stroke="#667"/><text x="2.500" y="13" font-family="Liberation Serif" font-size="14" font-weight="bold" fill="#2a6fd6">e</text></svg>
<div class="tb" style="left:425px;width:158px"><span style="left:29px;top:0">Форумы GIS-Lab.info...</span></div>
<svg style="left:435px;top:1001px" width="15" height="16" viewBox="0 0 15 16"><rect x="1" y="1" width="13" height="14" fill="#eef4fc" stroke="#667"/><text x="2.500" y="13" font-family="Liberation Serif" font-size="14" font-weight="bold" fill="#2a6fd6">e</text></svg>
<div class="tb" style="left:585px;width:159px"><span style="left:29px;top:0">sh</span></div>
<div class="t" style="left:595px;top:1001px;font:italic bold 15px 'Liberation Serif',serif;color:#dfe8fb">M</div>
<div class="tb" style="left:746px;width:159px;background:#1e4fb4"><span style="left:29px;top:0"><b style="color:#f4c040">3</b> python</span></div>
<svg style="left:755px;top:1001px" width="16" height="16" viewBox="0 0 16 16"><path d="M8 1c-3 0-4 1-4 3v2h4v1H3C1 7 1 9 1 10s1 3 3 3V10c0-1 1-2 2-2h4c1 0 2-1 2-2V3c0-1-1-2-4-2z" fill="#cfd8e8"/><path d="M8 15c3 0 4-1 4-3v-2H8V9h5c2 0 2-2 2-3s-1-3-3-3v3c0 1-1 2-2 2H6c-1 0-2 1-2 2v3c0 1 1 2 4 2z" fill="#f4c840"/></svg>
<svg style="left:896px;top:1008px" width="6" height="4"><path d="M0 0h6L3 4z" fill="#fff"/></svg>
<div class="t" style="left:1053px;top:1003px;font-size:12px;color:#dfe8fb">EN</div>
<div style="left:1080px;top:995px;width:200px;height:29px;background:linear-gradient(#1aa0ee,#1490e6 50%,#1280dc)"></div>
<svg style="left:1071px;top:999px" width="168" height="22" viewBox="0 0 168 22">
<circle cx="9" cy="11" r="8.500" fill="#2a70e4" stroke="#cde"/><path d="M11 6l-5 5 5 5" stroke="#fff" stroke-width="2" fill="none"/>
<path d="M22 6l8-3 2 12-8 4z" fill="#3a9a3a"/><rect x="24" y="10" width="9" height="6" fill="#555"/>
<circle cx="45" cy="11" r="8" fill="#55a040"/><path d="M38 8h14M38 14h14M45 3v16" stroke="#cfe8a0"/><circle cx="49" cy="16" r="4.500" fill="#f4c020"/>
<rect x="56" y="5" width="12" height="12" rx="2" fill="#b8d020" stroke="#556"/><path d="M60 8v6M64 8v6" stroke="#333" stroke-width="2"/>
<rect x="72" y="3" width="16" height="16" rx="4" fill="#e8eef8"/><circle cx="80" cy="11" r="5" fill="#2478c0"/><circle cx="80" cy="11" r="2" fill="#111"/>
<rect x="91" y="8" width="8" height="9" fill="#cfd8e8" stroke="#345"/><rect x="97" y="4" width="7" height="9" fill="#4a5a80" stroke="#234"/>
<path d="M112 2l10 3v8l-5 6-5-6z" fill="#60c040"/><path d="M114 9l3 3 4-5" stroke="#fff" stroke-width="2" fill="none"/>
<path d="M130 2l6 18 8-20h-5l-3 9-2-7z" fill="#d01818"/>
<rect x="146" y="3" width="14" height="16" rx="2" fill="#f4eef8" stroke="#a05090"/><text x="148" y="16" font-family="Liberation Serif" font-size="12" font-style="italic" fill="#904080">M</text>
</svg>
<div class="t" style="left:1240px;top:1004px;font-size:11.500px;color:#e8f0fb">10:28</div>
</body></html>
